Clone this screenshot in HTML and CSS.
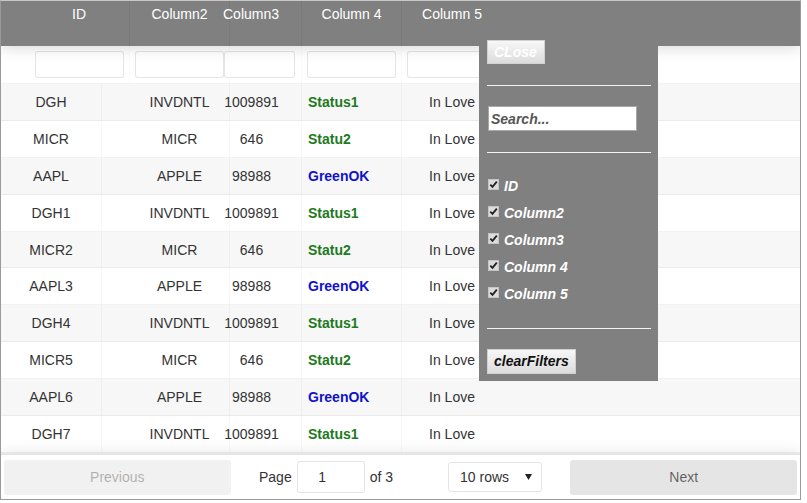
FILE: index.html
```html
<!DOCTYPE html>
<html>
<head>
<meta charset="utf-8">
<link rel="stylesheet" href="styles.css">
</head>
<body>
<div class="table">
  <div class="thead">
    <div class="th th-id">ID</div>
    <div class="th">Column2</div>
    <div class="th th-c3">Column3</div>
    <div class="th">Column 4</div>
    <div class="th th-last">Column 5</div>
    <div class="th th-rest"></div>
  </div>
  <div class="filters">
    <div class="fc fc-id"><input class="finput" type="text"></div>
    <div class="fc"><input class="finput" type="text"></div>
    <div class="fc fc-c3"><input class="finput" type="text"></div>
    <div class="fc"><input class="finput" type="text"></div>
    <div class="fc fc-last"><input class="finput" type="text"></div>
    <div class="fc fc-rest"></div>
  </div>
  <div class="tbody">
    <div class="tr odd"><div class="td">DGH</div><div class="td td-c2">INVDNTL</div><div class="td td-c3">1009891</div><div class="td td-c4 green">Status1</div><div class="td td-last">In Love</div><div class="td td-rest"></div></div>
    <div class="tr"><div class="td">MICR</div><div class="td td-c2">MICR</div><div class="td td-c3">646</div><div class="td td-c4 green">Statu2</div><div class="td td-last">In Love</div><div class="td td-rest"></div></div>
    <div class="tr odd"><div class="td">AAPL</div><div class="td td-c2">APPLE</div><div class="td td-c3">98988</div><div class="td td-c4 blue">GreenOK</div><div class="td td-last">In Love</div><div class="td td-rest"></div></div>
    <div class="tr"><div class="td">DGH1</div><div class="td td-c2">INVDNTL</div><div class="td td-c3">1009891</div><div class="td td-c4 green">Status1</div><div class="td td-last">In Love</div><div class="td td-rest"></div></div>
    <div class="tr odd"><div class="td">MICR2</div><div class="td td-c2">MICR</div><div class="td td-c3">646</div><div class="td td-c4 green">Statu2</div><div class="td td-last">In Love</div><div class="td td-rest"></div></div>
    <div class="tr"><div class="td">AAPL3</div><div class="td td-c2">APPLE</div><div class="td td-c3">98988</div><div class="td td-c4 blue">GreenOK</div><div class="td td-last">In Love</div><div class="td td-rest"></div></div>
    <div class="tr odd"><div class="td">DGH4</div><div class="td td-c2">INVDNTL</div><div class="td td-c3">1009891</div><div class="td td-c4 green">Status1</div><div class="td td-last">In Love</div><div class="td td-rest"></div></div>
    <div class="tr"><div class="td">MICR5</div><div class="td td-c2">MICR</div><div class="td td-c3">646</div><div class="td td-c4 green">Statu2</div><div class="td td-last">In Love</div><div class="td td-rest"></div></div>
    <div class="tr odd"><div class="td">AAPL6</div><div class="td td-c2">APPLE</div><div class="td td-c3">98988</div><div class="td td-c4 blue">GreenOK</div><div class="td td-last">In Love</div><div class="td td-rest"></div></div>
    <div class="tr"><div class="td">DGH7</div><div class="td td-c2">INVDNTL</div><div class="td td-c3">1009891</div><div class="td td-c4 green">Status1</div><div class="td td-last">In Love</div><div class="td td-rest"></div></div>
  </div>
  <div class="pagination">
    <div class="pg-prev"><button class="pg-btn pg-disabled">Previous</button></div>
    <div class="pg-center">
      <span class="pg-info">Page <input class="pg-input" type="text" value="1"> of 3</span>
      <div class="pg-select"><span>10 rows</span><svg class="pg-arrow" width="7" height="6" viewBox="0 0 7 6"><path d="M0 0 L7 0 L3.5 6 Z" fill="#222"/></svg></div>
    </div>
    <div class="pg-next"><button class="pg-btn">Next</button></div>
  </div>

  <div class="panel">
    <button class="pbtn pbtn-close">CLose</button>
    <hr class="phr hr1">
    <input class="psearch" type="text" placeholder="Search...">
    <hr class="phr hr2">
    <div class="plist">
      <label class="pitem"><span class="cb"><svg width="9" height="9" viewBox="0 0 9 9"><path d="M1.3 4.6 L3.5 6.9 L7.8 1.6" fill="none" stroke="#222" stroke-width="1.8"/></svg></span>ID</label>
      <label class="pitem"><span class="cb"><svg width="9" height="9" viewBox="0 0 9 9"><path d="M1.3 4.6 L3.5 6.9 L7.8 1.6" fill="none" stroke="#222" stroke-width="1.8"/></svg></span>Column2</label>
      <label class="pitem"><span class="cb"><svg width="9" height="9" viewBox="0 0 9 9"><path d="M1.3 4.6 L3.5 6.9 L7.8 1.6" fill="none" stroke="#222" stroke-width="1.8"/></svg></span>Column3</label>
      <label class="pitem"><span class="cb"><svg width="9" height="9" viewBox="0 0 9 9"><path d="M1.3 4.6 L3.5 6.9 L7.8 1.6" fill="none" stroke="#222" stroke-width="1.8"/></svg></span>Column 4</label>
      <label class="pitem"><span class="cb"><svg width="9" height="9" viewBox="0 0 9 9"><path d="M1.3 4.6 L3.5 6.9 L7.8 1.6" fill="none" stroke="#222" stroke-width="1.8"/></svg></span>Column 5</label>
    </div>
    <hr class="phr hr3">
    <button class="pbtn pbtn-clear">clearFilters</button>
  </div>
</div>
</body>
</html>
```

FILE: styles.css
```css
html, body {
  margin: 0;
  padding: 0;
  background: #fff;
}
body {
  font-family: "Liberation Sans", Arial, sans-serif;
  font-size: 14px;
  color: #333;
}
.table {
  position: relative;
  box-sizing: border-box;
  width: 801px;
  height: 500px;
  border: 1px solid #9a9a9a;
  border-top-color: #c8c8c8;
  display: flex;
  flex-direction: column;
  overflow: hidden;
}
.thead {
  position: relative;
  z-index: 1;
  display: grid;
  grid-template-columns: 129px 100px 72px 100px 100px 1fr;
  height: 45px;
  background: #808080;
  color: #fff;
  box-shadow: 0 2px 15px 0 rgba(0, 0, 0, 0.15);
}
.th {
  box-sizing: border-box;
  padding: 4px 5px 0;
  line-height: 18px;
  text-align: center;
  border-right: 1px solid rgba(0, 0, 0, 0.05);
  white-space: nowrap;
}
.th-id { padding-left: 28px; padding-right: 0; }
.th-c3 { padding-left: 0; padding-right: 0; text-align: left; text-indent: -7px; }
.th-last, .th-rest { border-right: 0; }

.filters {
  display: grid;
  grid-template-columns: 129px 100px 72px 100px 100px 1fr;
  height: 38px;
  background: #fff;
  border-bottom: 1px solid rgba(0, 0, 0, 0.05);
  box-sizing: border-box;
}
.fc {
  box-sizing: border-box;
  padding: 5px 5px 0;
  border-right: 1px solid rgba(0, 0, 0, 0.02);
  min-width: 0;
}
.fc-id { padding-left: 34px; }
.fc-c3 { padding-left: 0; padding-right: 6px; }
.fc-c3 .finput { margin-left: -6px; width: calc(100% + 6px); }
.fc-last, .fc-rest { border-right: 0; }
.finput {
  box-sizing: border-box;
  display: block;
  width: 100%;
  height: 27px;
  border: 1px solid rgba(0, 0, 0, 0.1);
  border-radius: 3px;
  background: #fff;
  padding: 0 5px;
  outline: none;
}

.tbody {
  display: flex;
  flex-direction: column;
}
.tr {
  display: grid;
  grid-template-columns: 101px 128px 72px 100px 100px 1fr;
  height: 36.9px;
  box-sizing: border-box;
  border-bottom: 1px solid rgba(0, 0, 0, 0.05);
  background: #fff;
}
.tr.odd { background: #f7f7f7; }
.td {
  display: flex;
  align-items: center;
  justify-content: center;
  white-space: nowrap;
  border-right: 1px solid rgba(0, 0, 0, 0.03);
  color: #333;
  min-width: 0;
}
.td-c2 { padding-left: 28px; }
.td-c3 { padding-right: 28px; }
.td-c4 { justify-content: flex-start; padding-left: 6px; }
.td-last, .td-rest { border-right: 0; }
.green { color: #1d7a1d; font-weight: bold; }
.blue { color: #1212c8; font-weight: bold; }

.pagination {
  flex: 1;
  display: flex;
  align-items: stretch;
  padding: 3px;
  border-top: 2px solid rgba(0, 0, 0, 0.1);
  box-shadow: 0 0 15px 0 rgba(0, 0, 0, 0.1);
  background: #fff;
  position: relative;
  z-index: 1;
}
.pg-prev, .pg-next { flex: 1; display: flex; }
.pg-center {
  flex: 1.5;
  display: flex;
  align-items: center;
  justify-content: center;
}
.pg-btn {
  flex: 1;
  border: 0;
  border-radius: 3px;
  background: rgba(0, 0, 0, 0.1);
  color: rgba(0, 0, 0, 0.6);
  font-family: "Liberation Sans", Arial, sans-serif;
  font-size: 14px;
  padding: 0;
  margin: 2px 0 1px;
}
.pg-disabled {
  opacity: 0.5;
}
.pg-info {
  display: flex;
  align-items: center;
  gap: 5px;
  color: #333;
}
.pg-input {
  box-sizing: border-box;
  width: 68px;
  height: 32px;
  border: 1px solid rgba(0, 0, 0, 0.1);
  border-radius: 3px;
  text-align: center;
  padding: 0 17px 0 0;
  font-family: "Liberation Sans", Arial, sans-serif;
  font-size: 14px;
  color: #333;
  outline: none;
}
.pg-select {
  box-sizing: border-box;
  margin-left: 55px;
  width: 94px;
  height: 30px;
  border: 1px solid rgba(0, 0, 0, 0.1);
  border-radius: 3px;
  display: flex;
  align-items: center;
  justify-content: space-between;
  padding: 0 9px 0 11px;
  color: #333;
}
.pg-arrow { display: block; }

.panel {
  position: absolute;
  z-index: 2;
  left: 478px;
  top: 31px;
  width: 179px;
  box-sizing: border-box;
  background: #808080;
  padding: 8px 7px 7px 8px;
  display: flex;
  flex-direction: column;
  align-items: flex-start;
}
.pbtn {
  font-family: "Liberation Sans", Arial, sans-serif;
  font-size: 14px;
  font-weight: bold;
  font-style: italic;
  line-height: 16px;
  padding: 3px 7px 3px 6px;
  border: 1px solid #d2d2d2;
  background: linear-gradient(#f7f7f7, #dcdcdc);
  border-radius: 0;
}
.pbtn-close { color: #fff; }
.pbtn-clear { color: #111; padding: 3px 6px 4px; border-color: #cfcfcf; }
.phr {
  align-self: stretch;
  height: 0;
  border: 0;
  border-top: 1px solid #f2f2f2;
  margin: 0;
}
.hr1 { margin: 21px 0 20px; }
.hr2 { margin: 21px 0 19px; }
.hr3 { margin: 21px 0 20px; }
.psearch {
  box-sizing: border-box;
  width: 149px;
  height: 25px;
  margin-left: 1px;
  border: 1px solid #a9a9a9;
  background: #fff;
  padding: 0 2px;
  font-family: "Liberation Sans", Arial, sans-serif;
  font-size: 14px;
  font-weight: bold;
  font-style: italic;
  outline: none;
}
.psearch::placeholder { color: #555; opacity: 1; }
.plist {
  display: flex;
  flex-direction: column;
}
.pitem {
  display: flex;
  align-items: center;
  height: 27px;
  color: #fff;
  font-weight: bold;
  font-style: italic;
  font-size: 14px;
}
.cb {
  box-sizing: border-box;
  width: 11px;
  height: 11px;
  margin: -3px 5px 0 1px;
  background: #dcdcdc;
  border: 1px solid #c4c4c4;
  display: flex;
  align-items: center;
  justify-content: center;
}
.cb svg { display: block; }
```
